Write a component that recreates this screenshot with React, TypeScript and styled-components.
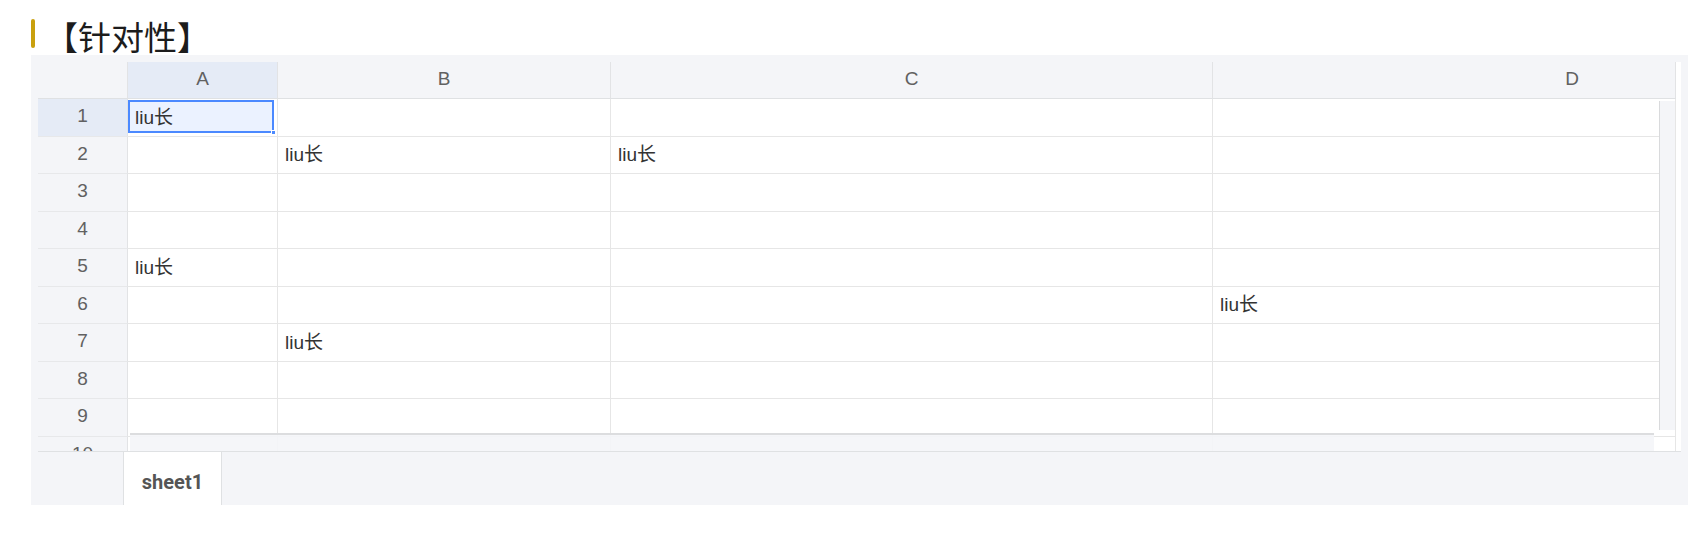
import React from 'react';
import styled, { createGlobalStyle } from 'styled-components';

const GlobalStyle = createGlobalStyle`
  html, body {
    margin: 0;
    padding: 0;
    background: #fff;
  }
  body {
    font-family: "Liberation Sans", "Noto Sans CJK SC", sans-serif;
  }
`;

interface ColumnDef {
  key: string;
  width: string;
  labelWidth?: number;
}

const columns: ColumnDef[] = [
  { key: 'A', width: '150px' },
  { key: 'B', width: '333px' },
  { key: 'C', width: '602px' },
  // D is wider than what is visible, its label sits in the middle of the full width
  { key: 'D', width: '1fr', labelWidth: 718 },
];

const ROW_COUNT = 10;

// row -> col -> text
const data: Record<number, Record<string, string>> = {
  1: { A: 'liu长' },
  2: { B: 'liu长', C: 'liu长' },
  5: { A: 'liu长' },
  6: { D: 'liu长' },
  7: { B: 'liu长' },
};

const selected = { row: 1, col: 'A' };

const App: React.FC = () => {
  const rows = Array.from({ length: ROW_COUNT }, (_, i) => i + 1);

  return (
    <>
      <GlobalStyle />
      <Page>
        <TitleRow>
          <TitleBar />
          <Title>【针对性】</Title>
        </TitleRow>

        <SheetFrame>
          <Sheet>
            <GridArea>
              <Table $cols={columns.map(c => c.width).join(' ')}>
                <Corner />
                {columns.map(c => (
                  <ColHead
                    key={c.key}
                    $active={c.key === selected.col}
                    $wide={!!c.labelWidth}
                  >
                    <ColLabel $width={c.labelWidth}>{c.key}</ColLabel>
                  </ColHead>
                ))}

                {rows.map(r => (
                  <React.Fragment key={r}>
                    <RowHead $active={r === selected.row}>{r}</RowHead>
                    {columns.map(c => {
                      const isSel = r === selected.row && c.key === selected.col;
                      return (
                        <Cell key={c.key}>
                          {isSel && <Selection />}
                          <CellText>{data[r]?.[c.key] ?? ''}</CellText>
                        </Cell>
                      );
                    })}
                  </React.Fragment>
                ))}
              </Table>

              <VScroll />
              <HScroll />
            </GridArea>

            <TabBar>
              <Tab>sheet1</Tab>
            </TabBar>
          </Sheet>
        </SheetFrame>
      </Page>
    </>
  );
};

const Page = styled.div`
  padding: 17px 11px 0 31px;
`;

const TitleRow = styled.div`
  display: flex;
  align-items: flex-start;
  height: 38px;
`;

const TitleBar = styled.div`
  width: 4px;
  height: 29px;
  margin-top: 2px;
  border-radius: 2px;
  background: #c9a00e;
`;

const Title = styled.h2`
  margin: 0 0 0 10px;
  font-family: "Noto Sans CJK SC", sans-serif;
  font-size: 33px;
  font-weight: 400;
  line-height: 38px;
  color: #1c1c1c;
`;

const SheetFrame = styled.div`
  box-sizing: border-box;
  height: 450px;
  padding: 7px 7px 0 7px;
  background: #f4f5f8;
`;

const Sheet = styled.div`
  height: 449px;
  background: #fff;
  display: flex;
  flex-direction: column;
`;

const GridArea = styled.div`
  position: relative;
  flex: none;
  height: 389px;
  padding-right: 5px;
  overflow: hidden;
`;

const Table = styled.div<{ $cols: string }>`
  display: grid;
  grid-template-columns: 90px ${p => p.$cols};
  grid-template-rows: 37px repeat(${ROW_COUNT}, 37.5px);
  font-size: 19px;
`;

const Corner = styled.div`
  background: #f4f5f8;
  border-right: 1px solid #e2e3e5;
  border-bottom: 1px solid #dfe1e3;
`;

const ColHead = styled.div<{ $active?: boolean; $wide?: boolean }>`
  box-sizing: border-box;
  display: flex;
  align-items: center;
  justify-content: ${p => (p.$wide ? 'flex-start' : 'center')};
  padding-bottom: 2px;
  overflow: hidden;
  background: ${p => (p.$active ? '#e5ebf6' : '#f4f5f8')};
  border-right: 1px solid #e2e3e5;
  border-bottom: 1px solid #dfe1e3;
  color: #616161;
`;

const ColLabel = styled.span<{ $width?: number }>`
  flex: none;
  width: ${p => (p.$width ? `${p.$width}px` : 'auto')};
  text-align: center;
`;

const RowHead = styled.div<{ $active?: boolean }>`
  box-sizing: border-box;
  display: flex;
  align-items: center;
  justify-content: center;
  padding-bottom: 2px;
  background: ${p => (p.$active ? '#e5ebf6' : '#f4f5f8')};
  border-right: 1px solid #e2e3e5;
  border-bottom: 1px solid #e7e8ea;
  color: #616161;
`;

const Cell = styled.div`
  position: relative;
  box-sizing: border-box;
  display: flex;
  align-items: center;
  padding: 0 0 4px 7px;
  border-right: 1px solid #e6e6e6;
  border-bottom: 1px solid #e6e6e6;
  color: #333;
  white-space: nowrap;
`;

const CellText = styled.span`
  position: relative;
  z-index: 1;
`;

const Selection = styled.div`
  position: absolute;
  left: 0;
  top: 1px;
  width: 146px;
  height: 33px;
  box-sizing: border-box;
  border: 2px solid #4b89ff;
  background: #ebf2ff;

  &::after {
    content: '';
    position: absolute;
    right: -4px;
    bottom: -4px;
    width: 3px;
    height: 3px;
    background: #4b89ff;
    border: 1px solid #fff;
  }
`;

const VScroll = styled.div`
  position: absolute;
  top: 39px;
  right: 6px;
  width: 16px;
  height: 329px;
  box-sizing: border-box;
  background: #f4f5f8;
  border-left: 1px solid #d9dadc;
  z-index: 2;
`;

const HScroll = styled.div`
  position: absolute;
  left: 92px;
  bottom: 0;
  width: 1524px;
  height: 18px;
  box-sizing: border-box;
  background: rgba(244, 245, 248, 0.92);
  border-top: 2px solid #dcdddf;
  z-index: 2;
`;

const TabBar = styled.div`
  box-sizing: border-box;
  flex: none;
  height: 60px;
  display: flex;
  padding-left: 85px;
  background: #f4f5f8;
  border-top: 1px solid #dfe1e3;
`;

const Tab = styled.div`
  box-sizing: border-box;
  width: 99px;
  display: flex;
  align-items: center;
  justify-content: center;
  background: #fff;
  border-left: 1px solid #dfe1e3;
  border-right: 1px solid #dfe1e3;
  font-family: Roboto, "Liberation Sans", sans-serif;
  font-size: 20px;
  font-weight: 700;
  color: #555;
`;

export default App;
